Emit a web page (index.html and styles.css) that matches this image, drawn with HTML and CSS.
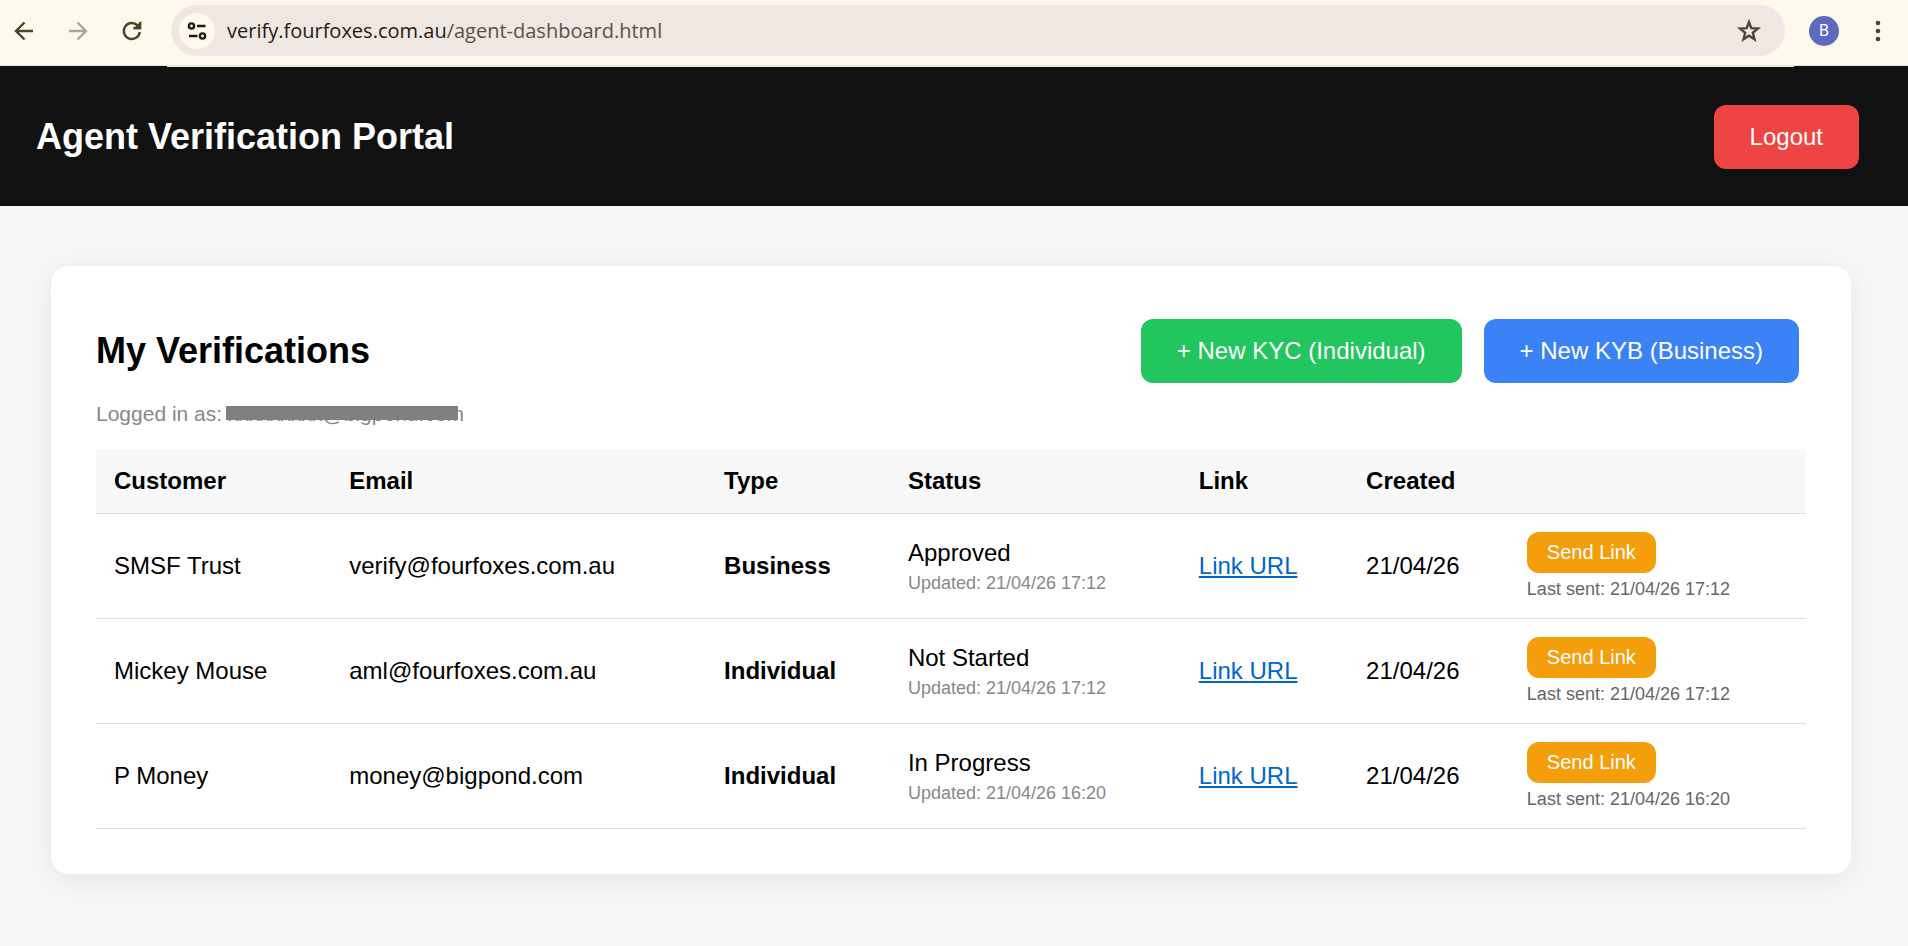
FILE: index.html
```html
<!DOCTYPE html>
<html lang="en">
<head>
  <meta charset="UTF-8" />
  <meta name="viewport" content="width=device-width, initial-scale=1.0">
  <title>Agent Verification Portal</title>
  <link rel="stylesheet" href="styles.css">
</head>
<body>

  <div class="browser-bar">
    <button class="nav-btn" type="button" aria-label="Back">
      <svg width="24" height="24" viewBox="0 0 24 24"><path d="M21 12H4.500M12.500 3.500L4 12l8.500 8.500" /></svg>
    </button>
    <button class="nav-btn disabled" type="button" aria-label="Forward">
      <svg width="24" height="24" viewBox="0 0 24 24"><path d="M3 12h16.500M11.500 3.500L20 12l-8.500 8.500" /></svg>
    </button>
    <button class="nav-btn" type="button" aria-label="Reload">
      <svg width="24" height="24" viewBox="0 0 24 24"><path d="M19.800 13A8 8 0 1 1 17.500 6.300L19.500 8.500M20 3v6h-6.500" /><path d="M20 5v4h-4z" /></svg>
    </button>
    <div class="address">
      <button class="site-info" type="button" aria-label="Site information">
        <svg width="24" height="24" viewBox="0 0 24 24"><circle cx="6.500" cy="7" r="2.600" /><path d="M12 7h8.500M4 17h8.500" /><circle cx="17.500" cy="17" r="2.600" /></svg>
      </button>
      <div class="url">verify.fourfoxes.com.au<span>/agent-dashboard.html</span></div>
      <button class="star" type="button" aria-label="Bookmark">
        <svg width="26" height="26" viewBox="0 0 26 26"><path d="M13 4.200l2.300 6 6.600.4-5.100 4.200 1.700 6.500L13 17.700l-5.500 3.600 1.700-6.500-5.100-4.200 6.600-.4z" /></svg>
      </button>
    </div>
    <button class="avatar" type="button" aria-label="Profile">B</button>
    <button class="menu" type="button" aria-label="Menu">
      <svg width="24" height="24" viewBox="0 0 24 24"><circle cx="12" cy="4" r="2.300" /><circle cx="12" cy="12" r="2.300" /><circle cx="12" cy="20" r="2.300" /></svg>
    </button>
  </div>

  <header class="topbar">
    <h1>Agent Verification Portal</h1>
    <button class="btn btn-red" type="button">Logout</button>
  </header>

  <main class="card">
    <div class="card-head">
      <h2>My Verifications</h2>
      <div class="actions">
        <button class="btn btn-green" type="button">+ New KYC (Individual)</button>
        <button class="btn btn-blue" type="button">+ New KYB (Business)</button>
      </div>
    </div>
    <div class="user">Logged in as: <span class="masked">xxxxxxxxx@bigpond.com</span></div>

    <table>
      <thead>
        <tr>
          <th>Customer</th>
          <th>Email</th>
          <th>Type</th>
          <th>Status</th>
          <th>Link</th>
          <th>Created</th>
          <th></th>
        </tr>
      </thead>
      <tbody>
        <tr>
          <td>SMSF Trust</td>
          <td>verify@fourfoxes.com.au</td>
          <td><strong>Business</strong></td>
          <td>Approved<div class="updated">Updated: 21/04/26 17:12</div></td>
          <td><a href="#">Link URL</a></td>
          <td>21/04/26</td>
          <td><button class="btn-send" type="button">Send Link</button><div class="sent">Last sent: 21/04/26 17:12</div></td>
        </tr>
        <tr>
          <td>Mickey Mouse</td>
          <td>aml@fourfoxes.com.au</td>
          <td><strong>Individual</strong></td>
          <td>Not Started<div class="updated">Updated: 21/04/26 17:12</div></td>
          <td><a href="#">Link URL</a></td>
          <td>21/04/26</td>
          <td><button class="btn-send" type="button">Send Link</button><div class="sent">Last sent: 21/04/26 17:12</div></td>
        </tr>
        <tr>
          <td>P Money</td>
          <td>money@bigpond.com</td>
          <td><strong>Individual</strong></td>
          <td>In Progress<div class="updated">Updated: 21/04/26 16:20</div></td>
          <td><a href="#">Link URL</a></td>
          <td>21/04/26</td>
          <td><button class="btn-send" type="button">Send Link</button><div class="sent">Last sent: 21/04/26 16:20</div></td>
        </tr>
      </tbody>
    </table>
  </main>

</body>
</html>
```
FILE: styles.css
```css
body {
  font-family: Arial, "Liberation Sans", sans-serif;
  font-size: 24px;
  background: #f7f7f7;
  margin: 0;
  color: #000;
}

button {
  font-family: inherit;
  border: none;
  cursor: pointer;
}

/* browser toolbar */
.browser-bar {
  display: flex;
  align-items: center;
  height: 61px;
  padding-bottom: 4px;
  background: #fff8ec;
  border-bottom: 1px solid #e8e2d6;
}

.nav-btn,
.menu {
  display: flex;
  padding: 0;
  margin-left: 12px;
  margin-right: 18px;
  background: none;
}

.nav-btn svg,
.site-info svg,
.star svg {
  fill: none;
  stroke: #4d4426;
  stroke-width: 2.4;
}

.nav-btn.disabled svg {
  stroke: #aaa59b;
}

.address {
  flex: 1;
  display: flex;
  align-items: center;
  height: 51px;
  margin-left: 9px;
  padding: 0 23px 0 8px;
  border-radius: 26px;
  background: #efe7e1;
}

.site-info {
  display: flex;
  align-items: center;
  justify-content: center;
  width: 36px;
  height: 36px;
  padding: 0;
  border-radius: 50%;
  background: #fff8ec;
}

.site-info svg {
  stroke: #1f1b13;
}

.url {
  flex: 1;
  margin-left: 12px;
  font-family: "Segoe UI", "Open Sans", "Noto Sans", sans-serif;
  font-size: 20px;
  color: #1f1b16;
}

.url span {
  color: #57524c;
}

.star {
  display: flex;
  padding: 0;
  background: none;
}

.star svg {
  stroke: #4b463d;
}

.avatar {
  width: 30px;
  height: 30px;
  margin-left: 24px;
  padding: 0;
  border-radius: 50%;
  background: #5c6bc0;
  color: #fff;
  font-family: Roboto, sans-serif;
  font-size: 16px;
}

.menu {
  margin-left: 27px;
}

.menu svg {
  fill: #4d4426;
}

/* page */
.topbar {
  display: flex;
  align-items: center;
  justify-content: space-between;
  padding: 39px 49px 37px 36px;
  background: #111 linear-gradient(#f3ecd9, #f3ecd9) 167px 0 / calc(100% - 281px) 1px no-repeat;
  color: #fff;
}

h1,
h2 {
  margin: 0;
  font-size: 36px;
  line-height: 42px;
}

.btn {
  padding: 18px 36px;
  border-radius: 12px;
  color: #fff;
  font-size: 24px;
  line-height: 28px;
}

.btn-red {
  background: #ef4444;
}

.btn-green {
  background: #22c55e;
}

.btn-blue {
  background: #3b82f6;
}

.card {
  margin: 60px 57px 60px 51px;
  padding: 53px 45px 45px;
  border-radius: 18px;
  background: #fff;
  box-shadow: 0 6px 30px rgba(0, 0, 0, 0.08);
}

.card-head {
  display: flex;
  align-items: center;
  justify-content: space-between;
  padding-right: 7px;
}

.actions {
  display: flex;
  gap: 22px;
}

.user {
  margin: 19px 0 23px;
  font-size: 21px;
  line-height: 24px;
  color: #888;
}

.masked {
  position: relative;
}

.masked::after {
  content: "";
  position: absolute;
  left: -2px;
  right: 6px;
  top: 4px;
  height: 14px;
  background: #808080;
}

table {
  width: 100%;
  border-collapse: collapse;
}

th,
td {
  padding: 18px;
  border-bottom: 1px solid #ddd;
  text-align: left;
  line-height: 28px;
}

th {
  background: #f8f8f8;
}

td a {
  color: #0066cc;
}

.updated,
.sent {
  margin-top: 6px;
  font-size: 18px;
  line-height: 21px;
}

.updated {
  color: #888;
}

.sent {
  color: #666;
}

.btn-send {
  display: block;
  padding: 9px 20px;
  border-radius: 12px;
  background: #f59e0b;
  color: #fff;
  font-size: 20px;
  line-height: 23px;
}
```
